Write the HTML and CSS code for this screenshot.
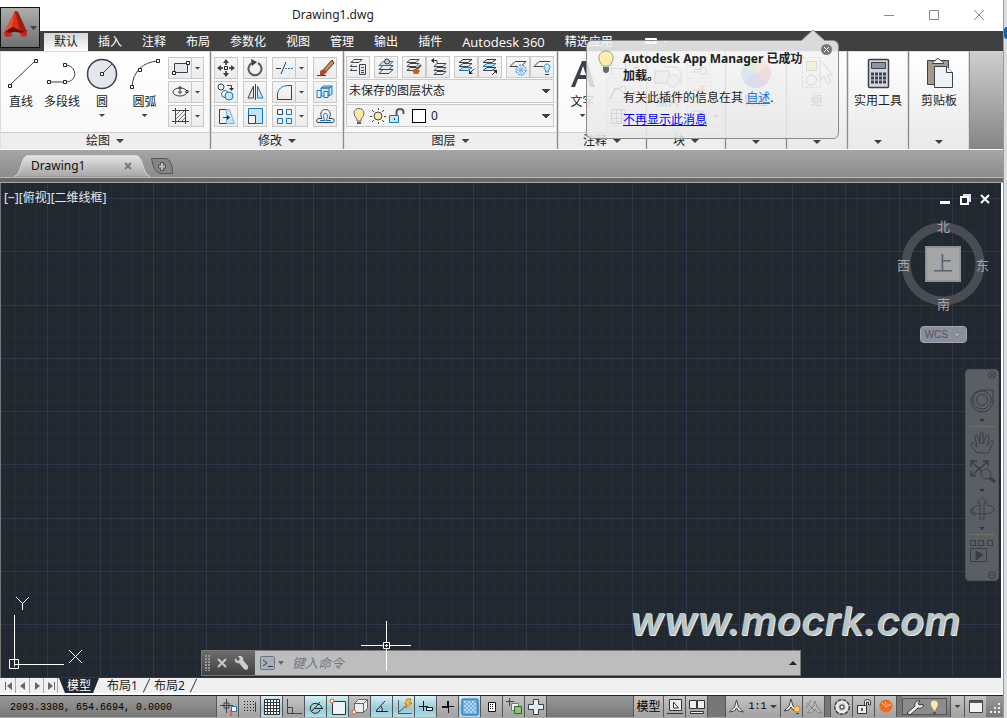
FILE: index.html
```html
<!DOCTYPE html>
<html lang="zh-CN">
<head>
<meta charset="utf-8">
<title>Drawing1.dwg</title>
<link rel="stylesheet" href="styles.css">
</head>
<body>
<div class="desktop">
<div class="app">
  <header class="titlebar">
    <h1 class="title">Drawing1.dwg</h1>
    <div class="win-controls">
      <button type="button" aria-label="最小化"><svg width="12" height="12"><path d="M1 6.500h10"/></svg></button>
      <button type="button" aria-label="最大化"><svg width="12" height="12"><path d="M1.500 1.500h9v9h-9z"/></svg></button>
      <button type="button" aria-label="关闭"><svg width="12" height="12"><path d="M1 1l10 10M11 1L1 11"/></svg></button>
    </div>
  </header>
  <button type="button" class="app-menu" aria-label="应用程序菜单">
    <svg width="38" height="39" viewBox="0 0 38 39">
      <path d="M14 3L3 25q0 3 3 4l5-1-1-4q5-2 9 0l1 4q4 2 6-1V24L17 4z" fill="#c4281b"/>
      <path d="M14 3L4 23l7-4z" fill="#e8513a"/><path d="M14 3l-3 16 8 3z" fill="#d8321f"/><path d="M14 3l3 1 9 20-7-2z" fill="#a31c12"/>
      <path d="M11 19l8 3 5 2-5 1q-5-2-10 0l-4-1z" fill="#6a0f0a"/><path d="M29 18h7l-3.500 4z" fill="#3d4450"/>
    </svg>
  </button>
  <nav class="tabs">
    <button type="button" class="tab active">默认</button><button type="button" class="tab">插入</button><button type="button" class="tab">注释</button><button type="button" class="tab">布局</button><button type="button" class="tab">参数化</button><button type="button" class="tab">视图</button><button type="button" class="tab">管理</button><button type="button" class="tab">输出</button><button type="button" class="tab">插件</button><button type="button" class="tab latin">Autodesk 360</button><button type="button" class="tab">精选应用</button>
    <button type="button" class="ribbon-toggle" aria-label="最小化功能区"><svg width="24" height="8"><rect x="0" y="1" width="12" height="6" rx="1" fill="#fff"/><path d="M4 5l2-2 2 2z" fill="#444"/><path d="M18 3h5l-2.500 3z" fill="#fff"/></svg></button>
  </nav>

  <section class="ribbon">
    <div class="panel p-draw">
      <div class="panel-body">
        <button type="button" class="big w-line"><svg width="34" height="34" viewBox="0 0 34 34"><path d="M6 28L31 4" class="k2"/><path d="M4.500 27.500h3v3h-3zM30.500 2.500h3v3h-3z" class="nd"/></svg><span>直线</span></button>
        <button type="button" class="big w-pline"><svg width="34" height="34" viewBox="0 0 34 34"><path d="M4 25h16c14 0 12-17 0-17" class="k2"/><path d="M2.500 23.500h3v3h-3zM18.500 23.500h3v3h-3zM18.500 6.500h3v3h-3z" class="nd"/></svg><span>多段线</span></button>
        <button type="button" class="big w-circle"><svg width="34" height="34" viewBox="0 0 34 34"><circle cx="17" cy="17" r="14.500" fill="#e3e6ea" stroke="#3b414b" stroke-width="1.500"/><path d="M17 17L27 7" class="k"/><path d="M15.500 15.500h3v3h-3z" class="nd"/></svg><span>圆</span><i class="dn"></i></button>
        <button type="button" class="big w-arc"><svg width="34" height="34" viewBox="0 0 34 34"><path d="M4 30C5 14 15 5 30 4" class="k2"/><path d="M2.500 28.500h3v3h-3zM10.500 11.500h3v3h-3zM28.500 2.500h3v3h-3z" class="nd"/></svg><span>圆弧</span><i class="dn"></i></button>
        <div class="stack">
          <div class="split"><button type="button" aria-label="矩形"><svg width="22" height="20"><path d="M5.500 5.500h13v9h-13z" fill="#e3e6ea" class="k"/><path d="M3.500 13.500h3v3h-3zM17.500 3.500h3v3h-3z" class="nd"/></svg></button><button type="button" class="dd" aria-label="矩形选项"><i class="dn"></i></button></div>
          <div class="split"><button type="button" aria-label="椭圆"><svg width="22" height="20"><ellipse cx="11" cy="10" rx="7" ry="4" class="k"/><path d="M11 8v4M9 10h4" class="k"/><path d="M17 8.500h2v2h-2zM10 5h2v2h-2z" class="nd"/></svg></button><button type="button" class="dd" aria-label="椭圆选项"><i class="dn"></i></button></div>
          <div class="split"><button type="button" aria-label="图案填充"><svg width="22" height="20"><path d="M6.500 2v16M16.500 2v16M3 4.500h17M3 15.500h17" class="k"/><path d="M7 9l4-4M7 13l8-8M9 15l7-7M13 15l3-3" stroke="#777" fill="none"/></svg></button><button type="button" class="dd" aria-label="填充选项"><i class="dn"></i></button></div>
        </div>
      </div>
      <button type="button" class="panel-label">绘图<i class="dn lg"></i></button>
    </div>

    <div class="panel p-modify">
      <div class="panel-body tools">
        <button type="button" class="sm" aria-label="移动"><svg width="22" height="20"><path d="M11 3v4M11 13v4M4 10h4M14 10h4" class="k2"/><path d="M8 5h6l-3-4zM8 15h6l-3 4zM6 7v6l-4-3zM16 7v6l4-3z" fill="#3b414b"/><path d="M9.500 8.500h3v3h-3z" class="nd"/></svg></button>
        <button type="button" class="sm" aria-label="旋转"><svg width="22" height="20"><path d="M14 5a6.500 6.500 0 1 1-6 0" class="k2"/><path d="M7 1l6 3-5 4z" fill="#3b414b"/></svg></button>
        <div class="split"><button type="button" aria-label="修剪"><svg width="22" height="20"><path d="M3 10.500h5M8 16l5-12" class="k"/><path d="M12 10.500h8" stroke="#1478c8" stroke-dasharray="2 1"/></svg></button><button type="button" class="dd" aria-label="修剪选项"><i class="dn"></i></button></div>
        <button type="button" class="sm" aria-label="删除"><svg width="22" height="20"><path d="M9 12l9-10 2 3-8 9z" fill="#d98a3d" stroke="#3b414b"/><path d="M6 13l4-2 3 3-3 3H6z" fill="#b8452e"/><path d="M3 17.500h9" class="k"/></svg></button>

        <button type="button" class="sm" aria-label="复制"><svg width="22" height="20"><circle cx="6" cy="5" r="3" class="k"/><circle cx="10" cy="12" r="3.500" class="b"/><circle cx="14" cy="14" r="4" class="bf"/><path d="M12 3.500h4.500V7" class="k"/><path d="M14 6h5l-2.500 3z" fill="#333"/></svg></button>
        <button type="button" class="sm" aria-label="镜像"><svg width="22" height="20"><path d="M9.500 4v12H4z" fill="#e3e6ea" class="k"/><path d="M11.500 2v16" class="k"/><path d="M13.500 4v12H19z" class="bf"/></svg></button>
        <div class="split"><button type="button" aria-label="圆角"><svg width="22" height="20"><path d="M4.500 11V17.500h14V3.500h-5" class="k"/><path d="M4.500 13C4.500 7 9 3.500 15 3.500" class="b"/></svg></button><button type="button" class="dd" aria-label="圆角选项"><i class="dn"></i></button></div>
        <button type="button" class="sm" aria-label="分解"><svg width="22" height="20"><path d="M7 6l3-2h8l-3 2zM7 6h8v8H7zM15 6l3-2v8l-3 2" class="bf"/><path d="M3 8.500h4v7H3zM10 9.500h4v6h-4z" fill="#eef7fc" stroke="#1478c8"/></svg></button>

        <button type="button" class="sm" aria-label="拉伸"><svg width="22" height="20"><path d="M11 3.500H4.500v14H12" class="k"/><path d="M11.500 3.500h3l5 14h-8z" fill="#c6e4f4" stroke="#7ab6dc"/><path d="M8 11.500h5" class="k"/><path d="M12 9l3 2.500-3 2.500z" fill="#222"/></svg></button>
        <button type="button" class="sm" aria-label="缩放"><svg width="22" height="20"><path d="M4.500 2.500h14v15h-14z" class="bf"/><path d="M4.500 9.500h7v8h-7z" fill="#f2f2f2" class="k"/></svg></button>
        <div class="split"><button type="button" aria-label="阵列"><svg width="22" height="20"><path d="M4.500 3.500h5v5h-5z" class="k"/><path d="M13.500 3.500h5v5h-5zM4.500 12.500h5v5h-5zM13.500 12.500h5v5h-5z" class="b"/></svg></button><button type="button" class="dd" aria-label="阵列选项"><i class="dn"></i></button></div>
        <button type="button" class="sm" aria-label="偏移"><svg width="22" height="20"><path d="M4 16.500h14c3 0 3-4 0-4h-3c2-3 2-9-3.500-9S6 9.500 8 12.500H5c-3 0-3 4-1 4" class="k"/><path d="M6 14.500h5c-2-3-2-7 .5-7s2.500 4 .5 7h5" class="b"/></svg></button>
      </div>
      <button type="button" class="panel-label">修改<i class="dn lg"></i></button>
    </div>

    <div class="panel p-layer">
      <div class="panel-body column">
        <div class="layer-tools">
          <div class="group"><button type="button" class="sm" aria-label="图层特性"><svg width="22" height="20"><path d="M7 2.500h8l-3 3H4zM5 7.500l-1 2h6M5 11.500l-1 2h6M5 9l-2 .5M5 13.500H3" class="k"/><path d="M12.500 7.500h6v10h-6z" fill="#e3e6ea" class="k"/><path d="M14 10.500h3" class="b"/><path d="M14 13.500h3M14 15.500h3" class="k"/></svg></button></div>
          <div class="group"><button type="button" class="sm" aria-label="置为当前"><svg width="22" height="20"><path d="M8 12.500h10l-4 4H4z" fill="#eee" class="k"/><path d="M8 8.500h10l-4 4H4z" fill="#eee" class="k"/><path d="M8 4.500h10l-4 4H4z" class="bf"/><circle cx="12" cy="4.500" r="2.500" fill="#ccc" stroke="#3b414b"/></svg></button></div>
          <div class="group"><button type="button" class="sm" aria-label="匹配图层"><svg width="22" height="20"><path d="M7 10.500h9l-3 3H4zM7 6.500h9l-3 3H4zM7 2.500h9l-3 3H4z" fill="#eee" class="k"/><path d="M18 8l-5 5" class="k2"/><path d="M9 13l5-2 3 3-2 3-4 0z" fill="#c8601c"/></svg></button><button type="button" class="sm" aria-label="上一个"><svg width="22" height="20"><path d="M10 14.500h9l-3 3H7zM10 10.500h9l-3 3H7zM10 6.500h9l-3 3H7z" fill="#eee" class="k"/><path d="M5 3.500h5v3" class="k"/><path d="M7 1v5L4 3.500z" fill="#222"/></svg></button></div>
          <div class="group"><button type="button" class="sm" aria-label="隔离"><svg width="22" height="20"><path d="M8 10.500h9l-4 3H4z" class="bf"/><path d="M8 6.500h9l-4 3H4zM8 2.500h9l-4 3H4z" fill="#eee" class="k"/><path d="M19 12l-4 4" class="k"/><path d="M14 13v4h4z" fill="#222"/></svg></button><button type="button" class="sm" aria-label="取消隔离"><svg width="22" height="20"><path d="M8 10.500h9l-4 3H4z" fill="#eee" class="k"/><path d="M8 6.500h9l-4 3H4z" class="bf"/><path d="M8 2.500h9l-4 3H4z" fill="#eee" class="k"/><path d="M13 18l4-4" class="k"/><path d="M14 13h4v4z" fill="#222"/></svg></button></div>
          <div class="group"><button type="button" class="sm" aria-label="冻结"><svg width="22" height="20"><path d="M8 4.500h11l-5 5H3z" class="k"/><circle cx="14" cy="13" r="5" fill="#e5f3fb" stroke="#1478c8" stroke-dasharray="2 1"/><path d="M14 9v8M10 13h8M11 10l6 6M17 10l-6 6" stroke="#6db0df"/></svg></button><button type="button" class="sm" aria-label="关闭图层"><svg width="22" height="20"><path d="M12 9.500H3l5-5h11" class="k"/><path d="M14.500 13c-3-3-1-6 1.500-6s4.500 3 1.500 6v2h-3z" fill="#c7e6f7" stroke="#3b8fc4"/><path d="M14 17.500h4" class="k"/></svg></button></div>
        </div>
        <select class="combo" aria-label="图层状态"><option>未保存的图层状态</option></select>
        <div class="layer-row">
          <svg width="58" height="20" viewBox="0 0 58 20"><path d="M5 13C0 8 2 2.500 7 2.500s7 5.500 2 10.500v2H5z" fill="#ffe9a0" stroke="#666"/><path d="M5 17h4" class="k2"/><circle cx="26" cy="10" r="4" fill="#ffe7a3" stroke="#444"/><path d="M26.500 2v2M26.500 16v2M18 10.500h2M32 10.500h2M20 4l2 2M30 14l2 2M32 4l-2 2M22 14l-2 2" class="k"/><path d="M37.500 9.500h9v7h-9z" class="bf"/><path d="M42.500 12v2" class="k"/><path d="M44.500 9V6c0-4 7-4 7 0v2" class="k2"/></svg><b class="swatch"></b>
          <select class="combo bare" aria-label="图层"><option>0</option></select>
        </div>
      </div>
      <button type="button" class="panel-label">图层<i class="dn lg"></i></button>
    </div>

    <div class="panel p-note">
      <div class="panel-body">
        <button type="button" class="big w-text"><svg width="34" height="34" viewBox="0 0 34 34"><path d="M5 30L16 4h5l8 26h-5l-3-8h-9l-3 8zM14 18h6l-3-9z" fill="#3b414b" fill-rule="evenodd"/></svg><span>文字</span><i class="dn"></i></button>
        <div class="stack">
          <div class="split"><button type="button" aria-label="标注"><svg width="22" height="20"><path d="M4.500 3v14M18.500 3v14M4 10.500h14" class="k"/></svg></button><button type="button" class="dd" aria-label="标注选项"><i class="dn"></i></button></div>
          <div class="split"><button type="button" aria-label="引线"><svg width="22" height="20"><path d="M3 17L8 7h5" class="k2"/><circle cx="16" cy="7" r="3" class="k"/></svg></button><button type="button" class="dd" aria-label="引线选项"><i class="dn"></i></button></div>
          <button type="button" class="sm" aria-label="表格"><svg width="22" height="20"><path d="M4.500 3.500h14v14h-14zM4.500 7.500h14M4.500 12.500h14M9.500 3v14M14.500 3v14" class="k"/></svg></button>
        </div>
      </div>
      <button type="button" class="panel-label">注释<i class="dn lg"></i></button>
    </div>

    <div class="panel p-block">
      <div class="panel-body">
        <button type="button" class="big w-insert"><svg width="34" height="34" viewBox="0 0 34 34"><path d="M4 14h14v12H4z" fill="#dde1e6" class="k"/><path d="M12 10h13l5 5v12" class="k"/><circle cx="22" cy="24" r="6" fill="#e6e9ec" class="k"/></svg><span>插入</span></button>
        <div class="stack">
          <button type="button" class="sm" aria-label="创建块"><svg width="22" height="20"><path d="M5.500 4.500h7v7h-7M3 14h9" class="k"/><circle cx="15" cy="13" r="3.500" class="k"/></svg></button>
          <button type="button" class="sm" aria-label="编辑块"><svg width="22" height="20"><path d="M4 15h9M5 8h6v5" class="k"/><path d="M13 3h5l-3 4h3l-6 8 2-6h-3z" fill="#ef8b17"/></svg></button>
          <div class="split"><button type="button" aria-label="属性"><svg width="22" height="20"><path d="M4 5h12M4 14l5-6 7 6" class="k"/><path d="M8 15l8-9" stroke="#b22" stroke-width="2"/></svg></button><button type="button" class="dd" aria-label="属性选项"><i class="dn"></i></button></div>
        </div>
      </div>
      <button type="button" class="panel-label">块<i class="dn lg"></i></button>
    </div>

    <div class="panel tall">
      <button type="button" class="big"><svg width="34" height="34" viewBox="-17 -17 34 34"><path d="M0 0V-15A15 15 0 0 1 13-7.500z" fill="#f3a93c"/><path d="M0 0L13-7.500A15 15 0 0 1 13 7.500z" fill="#e65b4e"/><path d="M0 0L13 7.500A15 15 0 0 1 0 15z" fill="#a54bc0"/><path d="M0 0V15A15 15 0 0 1-13 7.500z" fill="#4f63d2"/><path d="M0 0L-13 7.500A15 15 0 0 1-13-7.500z" fill="#3fa7d0"/><path d="M0 0L-13-7.500A15 15 0 0 1 0-15z" fill="#68c25a"/></svg><span>特性</span></button>
      <i class="dn lg"></i>
    </div>
    <div class="panel tall">
      <button type="button" class="big"><svg width="34" height="34" viewBox="0 0 34 34"><path d="M2.500 1.500h18v30h-18z" fill="none" stroke="#2464c0" stroke-dasharray="3 2"/><path d="M6.500 5.500h10v9h-10z" fill="#fbd65c" class="k"/><circle cx="11.500" cy="24" r="5" class="k"/><path d="M20 4v20l4-4 4 8 3-2-4-7h6z" fill="#fff" stroke="#444"/></svg><span>组</span></button>
      <i class="dn lg"></i>
    </div>
    <div class="panel tall">
      <button type="button" class="big"><svg width="34" height="34" viewBox="0 0 34 34"><rect x="7.500" y="3.500" width="20" height="28" rx="1" fill="#d3d7dd" stroke="#3b414b" stroke-width="1.500"/><path d="M10.500 6.500h14v6h-14z" fill="#8e959f" stroke="#3b414b"/><path d="M10 18h15M10 22h15M10 26h15" stroke="#3b414b" stroke-width="3" stroke-dasharray="3 1"/></svg><span>实用工具</span></button>
      <i class="dn lg"></i>
    </div>
    <div class="panel tall">
      <button type="button" class="big"><svg width="34" height="34" viewBox="0 0 34 34"><path d="M5.500 4.500h21v24h-21z" fill="#a5988a" stroke="#3b414b"/><path d="M10.500 7.500q0-3 3-3 2-4 5 0 3 0 3 3z" fill="#f5f5f5" stroke="#3b414b"/><path d="M12.500 10.500h12l6 6v15h-18z" fill="#eef1f6" stroke="#3b414b"/><path d="M24.500 10.500v6h6" fill="#fff" stroke="#3b414b"/></svg><span>剪贴板</span></button>
      <i class="dn lg"></i>
    </div>
    <div class="ribbon-rest"></div>
  </section>

  <div class="file-tabs">
    <div class="file-tab">
      <svg class="tab-shape" viewBox="0 0 136 22" preserveAspectRatio="none"><defs><linearGradient id="ft" x1="0" y1="0" x2="0" y2="1"><stop offset="0" stop-color="#e4e4e4"/><stop offset="1" stop-color="#a6a6a6"/></linearGradient></defs><path d="M0 21.500C8 20 6 1 14 .5H122C130 1 128 20 136 21.500" fill="url(#ft)" stroke="#d8d8d8"/></svg>
      <a href="#drawing1">Drawing1</a>
      <button type="button" aria-label="关闭图形"><svg width="8" height="8"><path d="M1 1l6 6M7 1L1 7" stroke="#777" stroke-width="2"/></svg></button>
    </div>
    <button type="button" class="new-tab" aria-label="新图形"><svg width="22" height="16"><path d="M.5.5H14C20 .5 21.500 9 21.500 15.500H10C4 15.500 2 8 .5.5z" fill="#858585" stroke="#555"/><path d="M11 4v9M7 8.500h8" stroke="#555" stroke-width="4"/><path d="M11 5v7M8 8.500h6" stroke="#bbb" stroke-width="2"/></svg></button>
  </div>

  <main class="canvas" id="drawing1">
    <svg class="grid" width="100%" height="100%">
      <defs><pattern id="g" x="46" y="15" width="213" height="213" patternUnits="userSpaceOnUse">
        <path class="minor" d="M11.500 0v213M21.500 0v213M32.500 0v213M43.500 0v213M64.500 0v213M75.500 0v213M85.500 0v213M96.500 0v213M117.500 0v213M128.500 0v213M138.500 0v213M149.500 0v213M170.500 0v213M181.500 0v213M191.500 0v213M202.500 0v213M0 11.500h213M0 21.500h213M0 32.500h213M0 43.500h213M0 64.500h213M0 75.500h213M0 85.500h213M0 96.500h213M0 117.500h213M0 128.500h213M0 138.500h213M0 149.500h213M0 170.500h213M0 181.500h213M0 191.500h213M0 202.500h213"/>
        <path class="major" d="M.5 0v213M53.500 0v213M106.500 0v213M159.500 0v213M0 .5h213M0 53.500h213M0 107.500h213M0 160.500h213"/>
      </pattern></defs>
      <rect width="100%" height="100%" fill="url(#g)"/>
    </svg>
    <div class="view-label"><a href="#vp">[−]</a><a href="#view">[俯视]</a><a href="#style">[二维线框]</a></div>
    <div class="doc-controls">
      <button type="button" aria-label="最小化图形"><svg width="12" height="12"><path d="M1 9.500h10" stroke="#fff" stroke-width="3"/></svg></button>
      <button type="button" aria-label="还原图形"><svg width="12" height="12"><path d="M4 2h7v7" stroke="#ddd" stroke-width="2" fill="none"/><path d="M2 4h7v7H2z" fill="#212830" stroke="#fff" stroke-width="2"/></svg></button>
      <button type="button" aria-label="关闭图形窗口"><svg width="12" height="12"><path d="M2 2l8 8M10 2l-8 8" stroke="#fff" stroke-width="2"/></svg></button>
    </div>
    <div class="viewcube">
      <svg width="84" height="84" viewBox="0 0 84 84"><circle cx="42" cy="42" r="37" fill="none" stroke="#484c53" stroke-width="9"/></svg>
      <span class="n">北</span><span class="w">西</span><button type="button" class="face">上</button><span class="e">东</span><span class="s">南</span>
    </div>
    <button type="button" class="wcs">WCS<svg width="10" height="6"><path d="M1 1h8L5 5z" fill="#a9b3bc" stroke="#777f8a"/></svg></button>
    <div class="navbar">
      <svg width="32" height="210" viewBox="0 0 32 210">
        <g fill="none" stroke="#393d44">
          <circle cx="26" cy="5" r="3.500"/><path d="M24 3l4 4M28 3l-4 4"/>
          <path d="M16 20h11v10a11 11 0 1 1-11-10z"/><circle cx="16" cy="30" r="5.500"/><circle cx="16" cy="30" r="9"/>
          <path d="M10 82l-5-7c-1-3 2-3 3-1l3 3-2-10c0-3 3-3 3 0l2 7V64c0-3 3-3 3 0v10l3-8c1-2 3-1 3 1l-2 9 4-5c2-2 3 0 2 2l-5 10H13z"/>
          <path d="M6 92l18 17M21 92L5 106M5 97v-6h6M17 91h5v5M5 101v5h5" stroke-width="1.500"/><circle cx="20" cy="104" r="5" fill="#5a5f65"/><path d="M24 108l5 4" stroke-width="3"/>
          <path d="M14 149v-16h-3l5-6 5 6h-3v16zM14 135c-13 3-12 9 2 9s16-7 5-9M8 138l-3 5 5 3"/>
          <path d="M4.500 170.500h5v5h-5zM12.500 170.500h5v5h-5zM21.500 170.500h5v5h-5zM4.500 178.500h16v13h-16z"/><path d="M10 181l7 4-7 5z" fill="#393d44"/>
          <circle cx="26" cy="205" r="3.500"/><path d="M24 205h4"/>
        </g>
        <path d="M3 56.500h26M3 164.500h26" stroke="#6f7064"/>
        <path d="M13 49h6l-3 3zM13 119h6l-3 3zM13 157h6l-3 3z" fill="#30343a"/>
      </svg>
    </div>
    <div class="watermark">www.mocrk.com</div>
    <svg class="ucs" width="80" height="76" viewBox="0 0 80 76"><path d="M11.500 71.500V20M11.500 69.500H61M6.500 64.500h9v9h-9z" /><path d="M13 2l6.500 6.500L26 2M19.500 8v7M66 55l13 13M79 55L66 68"/></svg>
    <form class="command">
      <div class="cmd-left">
        <svg width="5" height="16"><path d="M1 0v16M4 0v16" stroke="#999" stroke-width="2" stroke-dasharray="2 1"/></svg>
        <button type="button" aria-label="关闭命令行"><svg width="10" height="10"><path d="M1 1l8 8M9 1L1 9" stroke="#ccc" stroke-width="2"/></svg></button>
        <button type="button" aria-label="自定义"><svg width="15" height="15"><path d="M1 2l3 3 2-2L4 0c4-1 6 2 5 4l5 6c1 3-2 5-4 3L5 7C2 8 0 5 1 2z" fill="#c9cdd1"/></svg></button>
      </div>
      <button type="button" class="prompt" aria-label="最近使用的命令"><svg width="24" height="15"><rect x=".5" y=".5" width="14" height="13" rx="1" fill="#a9b0ba" stroke="#6d7580"/><path d="M3 4l4 3-4 3M8 10.500h5" fill="none" stroke="#333d4a"/><path d="M18 5h6l-3 4z" fill="#666"/></svg></button>
      <input type="text" placeholder="键入命令" aria-label="键入命令">
      <button type="button" class="hist" aria-label="命令历史"><svg width="8" height="6"><path d="M0 5h8L4 1z" fill="#222"/></svg></button>
    </form>
    <svg class="crosshair" width="50" height="50" viewBox="0 0 50 50"><path d="M25.500 0v22M25.500 28v22M0 24.500h22M28 24.500h22M22.500 21.500h6v6h-6zM24 24.500h3M25.500 23v3"/></svg>
  </main>

  <nav class="layout-tabs">
    <div class="pager">
      <button type="button" aria-label="第一个"><svg width="10" height="10"><path d="M1 1h1v8H1zM8 1v8L3 5z"/></svg></button>
      <button type="button" aria-label="上一个布局"><svg width="10" height="10"><path d="M7 1v8L2 5z"/></svg></button>
      <button type="button" aria-label="下一个布局"><svg width="10" height="10"><path d="M3 1v8l5-4z"/></svg></button>
      <button type="button" aria-label="最后一个"><svg width="10" height="10"><path d="M8 1h1v8H8zM2 1v8l5-4z"/></svg></button>
    </div>
    <button type="button" class="ltab on">模型</button><button type="button" class="ltab">布局1</button><button type="button" class="ltab">布局2</button>
  </nav>

  <footer class="status">
    <output class="coords">2093.3308, 654.6694, 0.0000</output>
    <button type="button" class="st" aria-label="推断约束"><svg width="20" height="20"><path d="M8.500 2v14M2 8.500h13M6 6h5v5H6z" class="k"/><path d="M13.500 9.500h5v5h-5z" fill="#fff" stroke="#1478c8"/><path d="M13 13v6" stroke="#c33"/></svg></button>
    <button type="button" class="st" aria-label="捕捉"><svg width="20" height="20"><path d="M4 4.500h10M4 7.500h10M4 10.500h10M4 13.500h10" stroke="#222" stroke-dasharray="1 2"/><path d="M15.500 5v10" class="k"/></svg></button>
    <button type="button" class="st on" aria-label="栅格"><svg width="20" height="20"><path d="M2.500 2.500h15v15h-15zM5.500 2v16M8.500 2v16M11.500 2v16M14.500 2v16M2 5.500h16M2 8.500h16M2 11.500h16M2 14.500h16" fill="#fff" stroke="#333"/></svg></button>
    <button type="button" class="st" aria-label="正交"><svg width="20" height="20"><path d="M3.500 2v14.500H18M3 10.500h5.500v6" fill="none" stroke="#444"/></svg></button>
    <button type="button" class="st on" aria-label="极轴追踪"><svg width="20" height="20"><path d="M13 8a5 5 0 1 0 1 5M6 14l8-9M9 11.500h8M13 7q3 2 3 5" fill="none" stroke="#222"/></svg></button>
    <button type="button" class="st on" aria-label="对象捕捉"><svg width="20" height="20"><path d="M4.500 4.500h13v13h-13z" fill="#eef2f5" stroke="#333"/><circle cx="4" cy="4" r="2" fill="#fff" stroke="#e0571b"/></svg></button>
    <button type="button" class="st" aria-label="三维对象捕捉"><svg width="20" height="20"><path d="M4.500 6.500l4-4h9v9l-4 4h-9zM4 6.500h9.500v9M13.500 6.500l4-4" fill="#eee" stroke="#666"/><circle cx="4" cy="15" r="2" fill="#fff" stroke="#e0571b"/></svg></button>
    <button type="button" class="st on" aria-label="对象捕捉追踪"><svg width="20" height="20"><path d="M4 14.500h12M4 14L13 4M9 9q2 3 1 5" fill="none" stroke="#222"/></svg></button>
    <button type="button" class="st on" aria-label="动态UCS"><svg width="20" height="20"><path d="M4.500 3v13.500H18M4 16L15 6" fill="none" stroke="#555"/><path d="M13 2h4l-2 4h3l-6 5 1-4h-2z" fill="#ffc928" stroke="#d9731b"/></svg></button>
    <button type="button" class="st on" aria-label="动态输入"><svg width="20" height="20"><path d="M7.500 4v10M3 9.500h9M10.500 10.500h6v3h-6z" fill="#dff0f5" stroke="#111"/></svg></button>
    <button type="button" class="st" aria-label="线宽"><svg width="20" height="20"><path d="M10.500 4v12M10 9.500h6" stroke="#111"/><path d="M4 10h6V4" fill="none" stroke="#111" stroke-width="2"/></svg></button>
    <button type="button" class="st on" aria-label="透明度"><svg width="20" height="20"><rect x="2" y="2" width="16" height="16" rx="1" fill="#74aee0" stroke="#1864b4"/><path d="M4 5h12M4 9h12M4 13h12" stroke="#b7d9f3" stroke-width="2" stroke-dasharray="2 2"/><path d="M6 7h10M6 11h10M6 15h10" stroke="#b7d9f3" stroke-width="2" stroke-dasharray="2 2"/></svg></button>
    <button type="button" class="st" aria-label="快捷特性"><svg width="20" height="20"><path d="M6.500 5.500h7v9h-7z" fill="#fff" stroke="#111"/><path d="M8 7.500h4M8 9.500h4M8 11.500h4" stroke="#111" stroke-dasharray="1 1"/></svg></button>
    <button type="button" class="st" aria-label="选择循环"><svg width="20" height="20"><path d="M5.500 1v8M2 4.500h8" class="k"/><path d="M7.500 6.500h7v7h-7z" fill="#eee" stroke="#777"/><path d="M10.500 9.500h7v7h-7z" fill="#8dc47a" stroke="#2c6b22"/></svg></button>
    <button type="button" class="st" aria-label="注释监视器"><svg width="20" height="20"><path d="M7.500 2.500h5v5h5v5h-5v5h-5v-5h-5v-5h5z" fill="#e9eef4" stroke="#3b414b"/></svg></button>
    <span class="st-fill"></span>
    <button type="button" class="st text">模型</button>
    <button type="button" class="st" aria-label="快速查看布局"><svg width="20" height="20"><path d="M4.500 2.500h12v11h-12z" fill="#eee" stroke="#333"/><path d="M8.500 5v6h5z" fill="#fff" stroke="#333"/><path d="M2 16.500h16" stroke="#333"/></svg></button>
    <button type="button" class="st" aria-label="快速查看图形"><svg width="20" height="20"><path d="M2.500 3.500h7v8h-7zM10.500 3.500h7v8h-7z" fill="#eee" stroke="#333"/><path d="M3.500 14.500h13v2h-13z" fill="#eee" stroke="#333"/></svg></button>
    <span class="gap wide"></span>
    <button type="button" class="st scale"><svg width="17" height="16"><path d="M8.500 1l2 7 5 5-5-1-2-3-2 3-5 1 5-5z" fill="#eee" stroke="#444"/></svg>1:1<i class="dn lg"></i></button>
    <button type="button" class="st" aria-label="注释可见性"><svg width="20" height="20"><path d="M9 2l2 7 5 5-5-1-2-3-2 3-5 1 5-5z" fill="#eee" stroke="#444"/><circle cx="15" cy="12" r="3" fill="#ffd36c" stroke="#e08a1c"/><path d="M14 16.500h3" class="k"/></svg></button>
    <button type="button" class="st" aria-label="自动缩放"><svg width="20" height="20"><path d="M11 4l2 6 5 6-5-1-2-3-2 3-6 1 6-6zM7 3l-5 8M3 6l8 8" fill="#bbb" stroke="#858585"/></svg></button>
    <span class="gap"></span>
    <button type="button" class="st" aria-label="切换工作空间"><svg width="20" height="20"><circle cx="10" cy="10" r="6" fill="none" stroke="#444" stroke-width="4" stroke-dasharray="3 1"/><circle cx="10" cy="10" r="5" fill="none" stroke="#eee" stroke-width="3"/><circle cx="10" cy="10" r="2" fill="#fff" stroke="#333"/></svg></button>
    <button type="button" class="st" aria-label="锁定"><svg width="20" height="20"><path d="M3.500 8.500h9v8h-9z" fill="#eee" stroke="#333"/><path d="M8 11v3" class="k2"/><path d="M10.500 8V4.500q0-2 3-2t3 2V8h-2V5h-2v3" fill="#eee" stroke="#333"/></svg></button>
    <button type="button" class="st" aria-label="硬件加速"><svg width="20" height="20"><circle cx="10" cy="9" r="6.500" fill="#ef6b1f"/><path d="M6 6l4 4 5-3M9 5l2 3" fill="none" stroke="#ffd2ad"/></svg></button>
    <span class="gap"></span>
    <div class="tray"><svg width="42" height="16"><path d="M4 14L12 7c-1-3 2-6 5-5l-2 3 2 1 3-1c1 3-2 5-5 4l-8 7z" fill="#eee" stroke="#333"/><path d="M30 10c-5-5-2-9 1-9s7 4 2 9v2h-3z" fill="#ffe9a0" stroke="#888"/><path d="M30 14h3" class="k2"/></svg></div>
    <button type="button" class="st slim" aria-label="状态栏菜单"><i class="dn"></i></button>
    <button type="button" class="st" aria-label="全屏显示"><svg width="20" height="20"><path d="M3.500 3.500h13v12h-13z" fill="#f2f2f2" stroke="#444"/><path d="M4 5h12" stroke="#555" stroke-width="2"/></svg></button>
    <svg class="grip" width="17" height="20"><path d="M12 8h3M8 12h7M4 16h11" stroke="#eee" stroke-width="2" stroke-dasharray="2 2"/></svg>
  </footer>

  <aside class="balloon" role="status">
    <svg class="tip" width="24" height="12"><path d="M0 12L12 1l12 11" fill="#d9d9d9" stroke="#999"/></svg>
    <svg class="bulb" width="16" height="24"><path d="M5 16C-3 8 2 1 8 1s11 7 3 15z" fill="#ffedae" stroke="#998"/><path d="M5 17h6v4l-2 2H7l-2-2z" fill="#666b73"/></svg>
    <div class="msg"><strong>Autodesk App Manager 已成功加载。</strong><p>有关此插件的信息在其 <a href="#readme" class="readme">自述</a>.</p><p><a href="#hide">不再显示此消息</a></p></div>
    <button type="button" class="close" aria-label="关闭消息"><svg width="11" height="11"><circle cx="5.500" cy="5.500" r="5.500" fill="#777"/><path d="M3 3l5 5M8 3L3 8" stroke="#fff"/></svg></button>
  </aside>
</div>
<div class="edge"><i></i></div>
</div>
</body>
</html>
```

FILE: styles.css
```css
* { box-sizing: border-box; }
body { margin: 0; font: 12px/16px "Noto Sans", "Noto Sans CJK SC", sans-serif; color: #222; }
button, input, select { font: inherit; color: inherit; margin: 0; padding: 0; border: 0; background: none; border-radius: 0; }
svg { display: block; flex: none; }
a { color: inherit; text-decoration: none; }
.k, .k2, .b { stroke: #3b414b; }
.k:not([fill]), .k2, .b { fill: none; }
.k2 { stroke-width: 2; stroke: #555b64; }
.big .k2 { stroke-width: 1px; stroke: #3b414b; }
.b { stroke: #1478c8; }
.bf { fill: #c6e4f4; stroke: #1478c8; }
.nd { fill: #fff; stroke: #222; }

.desktop { display: flex; height: 100vh; overflow: hidden; }
.app { flex: 1; min-width: 0; position: relative; display: flex; flex-direction: column; background: #fff; }
.edge { width: 4px; background: #dadde2; border-left: 1px solid #999; padding-top: 27px; }
.edge i { display: block; height: 12px; background: #0f62a8; border-radius: 6px 0 0 6px; }

.titlebar { display: flex; align-items: center; height: 31px; padding: 0 0 2px 292px; }
.title { flex: 1; margin: 0; font-size: 12px; font-weight: 400; }
.win-controls { display: flex; gap: 33px; padding-right: 18px; }
.win-controls path { fill: none; stroke: #888; }
.app-menu { position: absolute; left: 0; top: 7px; width: 40px; height: 41px; border: 1px solid #111; background: linear-gradient(#aeaeae, #6f6f6f); z-index: 2; }

.tabs { display: flex; align-items: flex-end; height: 20px; padding-left: 44px; background: #404040; }
.tab { height: 18px; padding: 0 10px; color: #fff; white-space: nowrap; }
.tab.active { background: linear-gradient(#d5d5d5, #fdfdfd); color: #222; }
.tab.latin { font-family: "Open Sans", sans-serif; font-size: 13px; }
.ribbon-toggle { align-self: center; margin-left: 22px; }

.ribbon { display: flex; height: 99px; background: #8a8a8a; border-bottom: 1px solid #fff; }
.panel { display: flex; flex-direction: column; flex: none; background: linear-gradient(#fff, #f7f7f7); border: 1px solid #ddd; border-width: 1px 1px 0; margin-right: 1px; }
.panel-body { display: flex; flex: 1; padding-top: 5px; }
.panel-label { display: flex; align-items: center; justify-content: center; gap: 6px; height: 17px; background: #eee; border-top: 1px solid #ccc; }
.p-draw { width: 210px; }
.p-modify { width: 132px; }
.p-layer { width: 213px; }
.p-note { width: 88px; }
.p-block { width: 78px; }
.tall { width: 60px; align-items: center; justify-content: space-between; padding: 4px 0 5px; background: linear-gradient(#fff, #e9e9e9); }
.ribbon-rest { flex: 1; background: linear-gradient(#cfcfcf, #858585); }

.dn { display: inline-block; width: 6px; height: 3px; background: #3b414b; clip-path: polygon(0 0, 100% 0, 50% 100%); }
.dn.lg { width: 8px; height: 4px; }

.big { display: flex; flex-direction: column; align-items: center; gap: 3px; white-space: nowrap; }
.big span { height: 17px; }
.w-line { width: 40px; }
.w-pline { width: 42px; }
.w-circle { width: 38px; }
.w-arc { width: 47px; }
.w-text { width: 47px; }
.w-insert { width: 39px; }
.stack { display: flex; flex-direction: column; gap: 2px; }
.split { display: flex; height: 22px; border: 1px solid #c9c9c9; background: linear-gradient(#f6f6f6, #ececec); }
.split .dd { width: 12px; display: flex; align-items: center; justify-content: center; border-left: 1px solid #c9c9c9; }
.sm { width: 24px; height: 22px; border: 1px solid #c9c9c9; background: linear-gradient(#f6f6f6, #ececec); }
.tools { display: grid; grid-template-columns: 24px 24px 36px 24px; grid-auto-rows: 22px; gap: 2px 5px; padding-left: 2px; }
.column { flex-direction: column; gap: 1px; padding: 4px 2px 0 1px; }
.layer-tools { display: flex; gap: 4px; }
.group { display: flex; }
.combo { height: 24px; padding: 0 2px; border: 1px solid #c9c9c9; appearance: none; background: conic-gradient(from 315deg at 50% 100%, #3b414b 90deg, transparent 0) no-repeat right 3px center / 8px 4px, #f4f4f4; rotate: none; }
.layer-row { display: flex; align-items: center; height: 23px; border: 1px solid #c9c9c9; background: #f4f4f4; padding-left: 5px; }
.swatch { width: 14px; height: 14px; margin-left: 2px; border: 1px solid #000; background: #fff; }
.combo.bare { flex: 1; height: 20px; border: 0; padding-left: 5px; }

.file-tabs { display: flex; align-items: flex-end; height: 33px; padding: 0 0 6px 14px; background: linear-gradient(#a5a5a5, #8c8c8c 27px, #b8b8b8 27px, #b8b8b8 28px, #696969 28px, #696969 32px, #a8a8a8 32px); }
.file-tab { position: relative; display: flex; align-items: center; width: 136px; height: 22px; padding: 0 18px 0 17px; color: #111; }
.tab-shape { position: absolute; left: 0; top: 0; width: 100%; height: 100%; }
.file-tab a { position: relative; flex: 1; }
.file-tab button { position: relative; }
.new-tab { padding-bottom: 3px; margin-left: 1px; }

.canvas { flex: 1; min-height: 0; position: relative; margin-right: 2px; border-left: 1px solid #777; background: #212830; overflow: hidden; }
.grid { position: absolute; }
.minor { stroke: #262d38; }
.major { stroke: #30374d; }
.view-label { position: absolute; left: 3px; top: 7px; color: #e8e8e8; }
.doc-controls { position: absolute; right: 10px; top: 10px; display: flex; gap: 8px; }
.viewcube { position: absolute; right: 16px; top: 39px; width: 84px; height: 84px; color: #a5a7aa; font-size: 13px; }
.viewcube span { position: absolute; }
.n { left: 36px; top: -4px; }
.s { left: 36px; bottom: -6px; }
.w { left: -4px; top: 35px; }
.e { right: -4px; top: 35px; }
.viewcube .face { position: absolute; left: 24px; top: 24px; width: 36px; height: 36px; border: 2px solid #919395; background: #a4a6a8; color: #5d646d; font-size: 20px; line-height: 30px; }
.wcs { position: absolute; right: 34px; top: 143px; display: flex; align-items: center; gap: 4px; height: 17px; padding: 0 4px; border: 1px solid #a3a5b0; border-radius: 4px; background: #8c8e9b; color: #50545f; font: 10px "Liberation Sans", sans-serif; }
.navbar { position: absolute; right: 2px; top: 186px; border-radius: 4px; background: #5a5f65; border: 1px solid #4e5359; }
.watermark { position: absolute; right: 41px; top: 410px; color: #b9c5c5; font: italic 600 40px/56px Inter, sans-serif; text-shadow: 1px 1px 0 #e8eeee; }
.ucs { position: absolute; left: 2px; bottom: 7px; fill: none; stroke: #fff; }
.crosshair { position: absolute; left: 360px; top: 438px; fill: none; stroke: #fff; }
.command { position: absolute; left: 200px; right: 200px; bottom: 2px; height: 26px; margin: 0; display: flex; align-items: center; background: #bcbdbf; border: 1px solid #777; }
.cmd-left { display: flex; align-items: center; gap: 7px; width: 53px; height: 24px; padding-left: 3px; background: linear-gradient(#6d6d6d, #404040); }
.prompt { margin-left: 5px; }
.command input { flex: 1; min-width: 0; margin-left: 8px; font-style: italic; font-size: 13px; outline: 0; }
.command input::placeholder { color: #777; opacity: 1; }
.hist { margin-right: 3px; }

.layout-tabs { display: flex; height: 17px; padding-left: 2px; background: #f0f0f0; border-bottom: 2px solid #fff; }
.pager { display: flex; margin-right: 1px; }
.pager button { width: 14px; display: flex; align-items: center; justify-content: center; border-right: 1px solid #aaa; }
.pager path { fill: #666; }
.ltab { position: relative; padding: 0 8px; height: 15px; line-height: 15px; }
.ltab::after { content: ""; position: absolute; right: -1px; top: 0; width: 1px; height: 15px; background: #444; rotate: 25deg; }
.ltab.on { color: #fff; background: #212830; clip-path: polygon(0 0, 100% 0, calc(100% - 6px) 100%, 6px 100%); }

.status { display: flex; height: 23px; border-top: 1px solid #222; border-bottom: 1px solid #aaa; background: linear-gradient(#999, #777); }
.coords { width: 216px; padding: 4px 0 0 10px; font: 10px/16px "Liberation Mono", monospace; color: #000; white-space: pre; }
.st { display: flex; align-items: center; justify-content: center; width: 22px; flex: none; border-left: 1px solid #555; background: linear-gradient(#c4c4c4, #a2a2a2); color: #000; }
.st.on { background: linear-gradient(#d8f0f5, #93cbd8 60%, #b2dde6); }
.st.text { width: 30px; }
.st.scale { width: 55px; gap: 3px; font-family: "Liberation Mono", monospace; font-size: 10px; }
.st.slim { width: 14px; }
.st-fill { flex: 1; border-left: 1px solid #555; }
.gap { width: 6px; border-left: 1px solid #555; background: #777; }
.gap.wide { width: 18px; }
.tray { width: 45px; margin: 2px 3px 2px 0; border: 1px solid #555; background: #8c8c8c; }
.grip { width: 17px; }

.balloon { position: absolute; right: 164px; top: 40px; width: 253px; height: 99px; display: flex; gap: 9px; padding: 9px 6px 0 11px; border: 1px solid #8a8a8a; border-radius: 6px; background: linear-gradient(rgba(246,246,246,.85), rgba(232,232,232,.87)); z-index: 3; }
.tip { position: absolute; right: 13px; top: -12px; }
.msg { flex: 1; }
.msg strong { display: block; line-height: 17px; }
.msg p { margin: 5px 0 0; line-height: 17px; white-space: nowrap; }
.msg a { color: #00f; text-decoration: underline; }
.msg .readme { color: #1478d8; }
.close { align-self: flex-start; margin-top: -6px; }
```
